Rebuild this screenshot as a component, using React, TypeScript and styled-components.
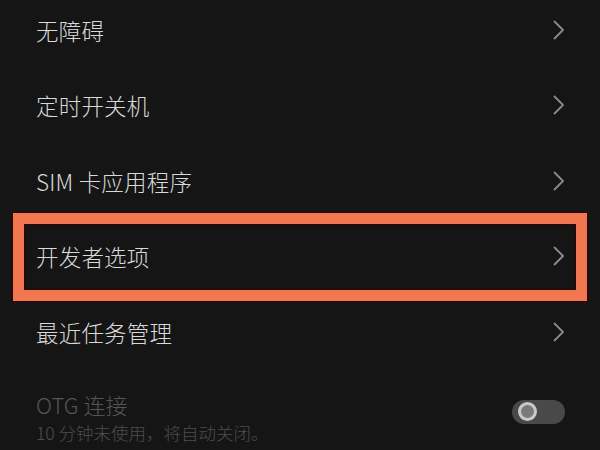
import React from "react";
import styled, { createGlobalStyle } from "styled-components";

const Global = createGlobalStyle`
  html, body { margin: 0; padding: 0; background: #151515; }
  body { width: 600px; height: 450px; overflow: hidden; }
`;

const Page = styled.div`
  width: 600px;
  height: 450px;
  background: #151515;
  overflow: hidden;
  font-family: "Noto Sans CJK SC", "Noto Sans", sans-serif;
  font-weight: 300;
`;

const List = styled.div`
  display: flex;
  flex-direction: column;
  margin-top: -8px;
`;

const Row = styled.div<{ $highlight?: boolean }>`
  position: relative;
  height: 75.5px;
  display: flex;
  align-items: center;
  justify-content: space-between;
  padding: 0 35px 0 36px;
  box-sizing: border-box;
  ${(p) =>
    p.$highlight &&
    `
    &::after {
      content: "";
      position: absolute;
      top: -6px;
      bottom: -7px;
      left: 13px;
      right: 13px;
      border: 11px solid #f0774f;
      box-shadow: 0 0 0 1.5px #2b0906, inset 0 0 0 1.5px #2b0906;
      pointer-events: none;
    }
  `}
`;

const Label = styled.span`
  font-size: 22.5px;
  color: #d9d9d9;
  line-height: 30px;
  letter-spacing: 0.2px;
`;

const Chevron = styled.svg`
  width: 12px;
  height: 20px;
  display: block;
`;

const ToggleRow = styled.div`
  display: flex;
  justify-content: space-between;
  align-items: flex-start;
  padding: 19px 35px 0 36px;
`;

const TextCol = styled.div`
  display: flex;
  flex-direction: column;
`;

const DimTitle = styled.span`
  font-size: 22px;
  line-height: 30px;
  color: #555555;
`;

const Sub = styled.span`
  font-size: 17.5px;
  line-height: 24px;
  margin-top: 2px;
  color: #4d4d4d;
`;

const Switch = styled.div`
  width: 53px;
  height: 24px;
  margin-top: 11px;
  border-radius: 12px;
  background: #494949;
  display: flex;
  align-items: center;
  padding-left: 6px;
  box-sizing: border-box;
`;

const Knob = styled.div`
  width: 19px;
  height: 19px;
  border-radius: 50%;
  box-sizing: border-box;
  border: 3.5px solid #c9c9c9;
  background: #7a7a7a;
`;

const Arrow = () => (
  <Chevron viewBox="0 0 12 20">
    <path
      d="M1.5 1.5 L10 10 L1.5 18.5"
      fill="none"
      stroke="#8a8a8a"
      strokeWidth="1.8"
      strokeLinecap="round"
      strokeLinejoin="round"
    />
  </Chevron>
);

const items = ["无障碍", "定时开关机", "SIM 卡应用程序", "开发者选项", "最近任务管理"];

export default function App() {
  return (
    <Page>
      <Global />
      <List>
        {items.map((t) => (
          <Row key={t} $highlight={t === "开发者选项"}>
            <Label>{t}</Label>
            <Arrow />
          </Row>
        ))}
        <ToggleRow>
          <TextCol>
            <DimTitle>OTG 连接</DimTitle>
            <Sub>10 分钟未使用，将自动关闭。</Sub>
          </TextCol>
          <Switch>
            <Knob />
          </Switch>
        </ToggleRow>
      </List>
    </Page>
  );
}
